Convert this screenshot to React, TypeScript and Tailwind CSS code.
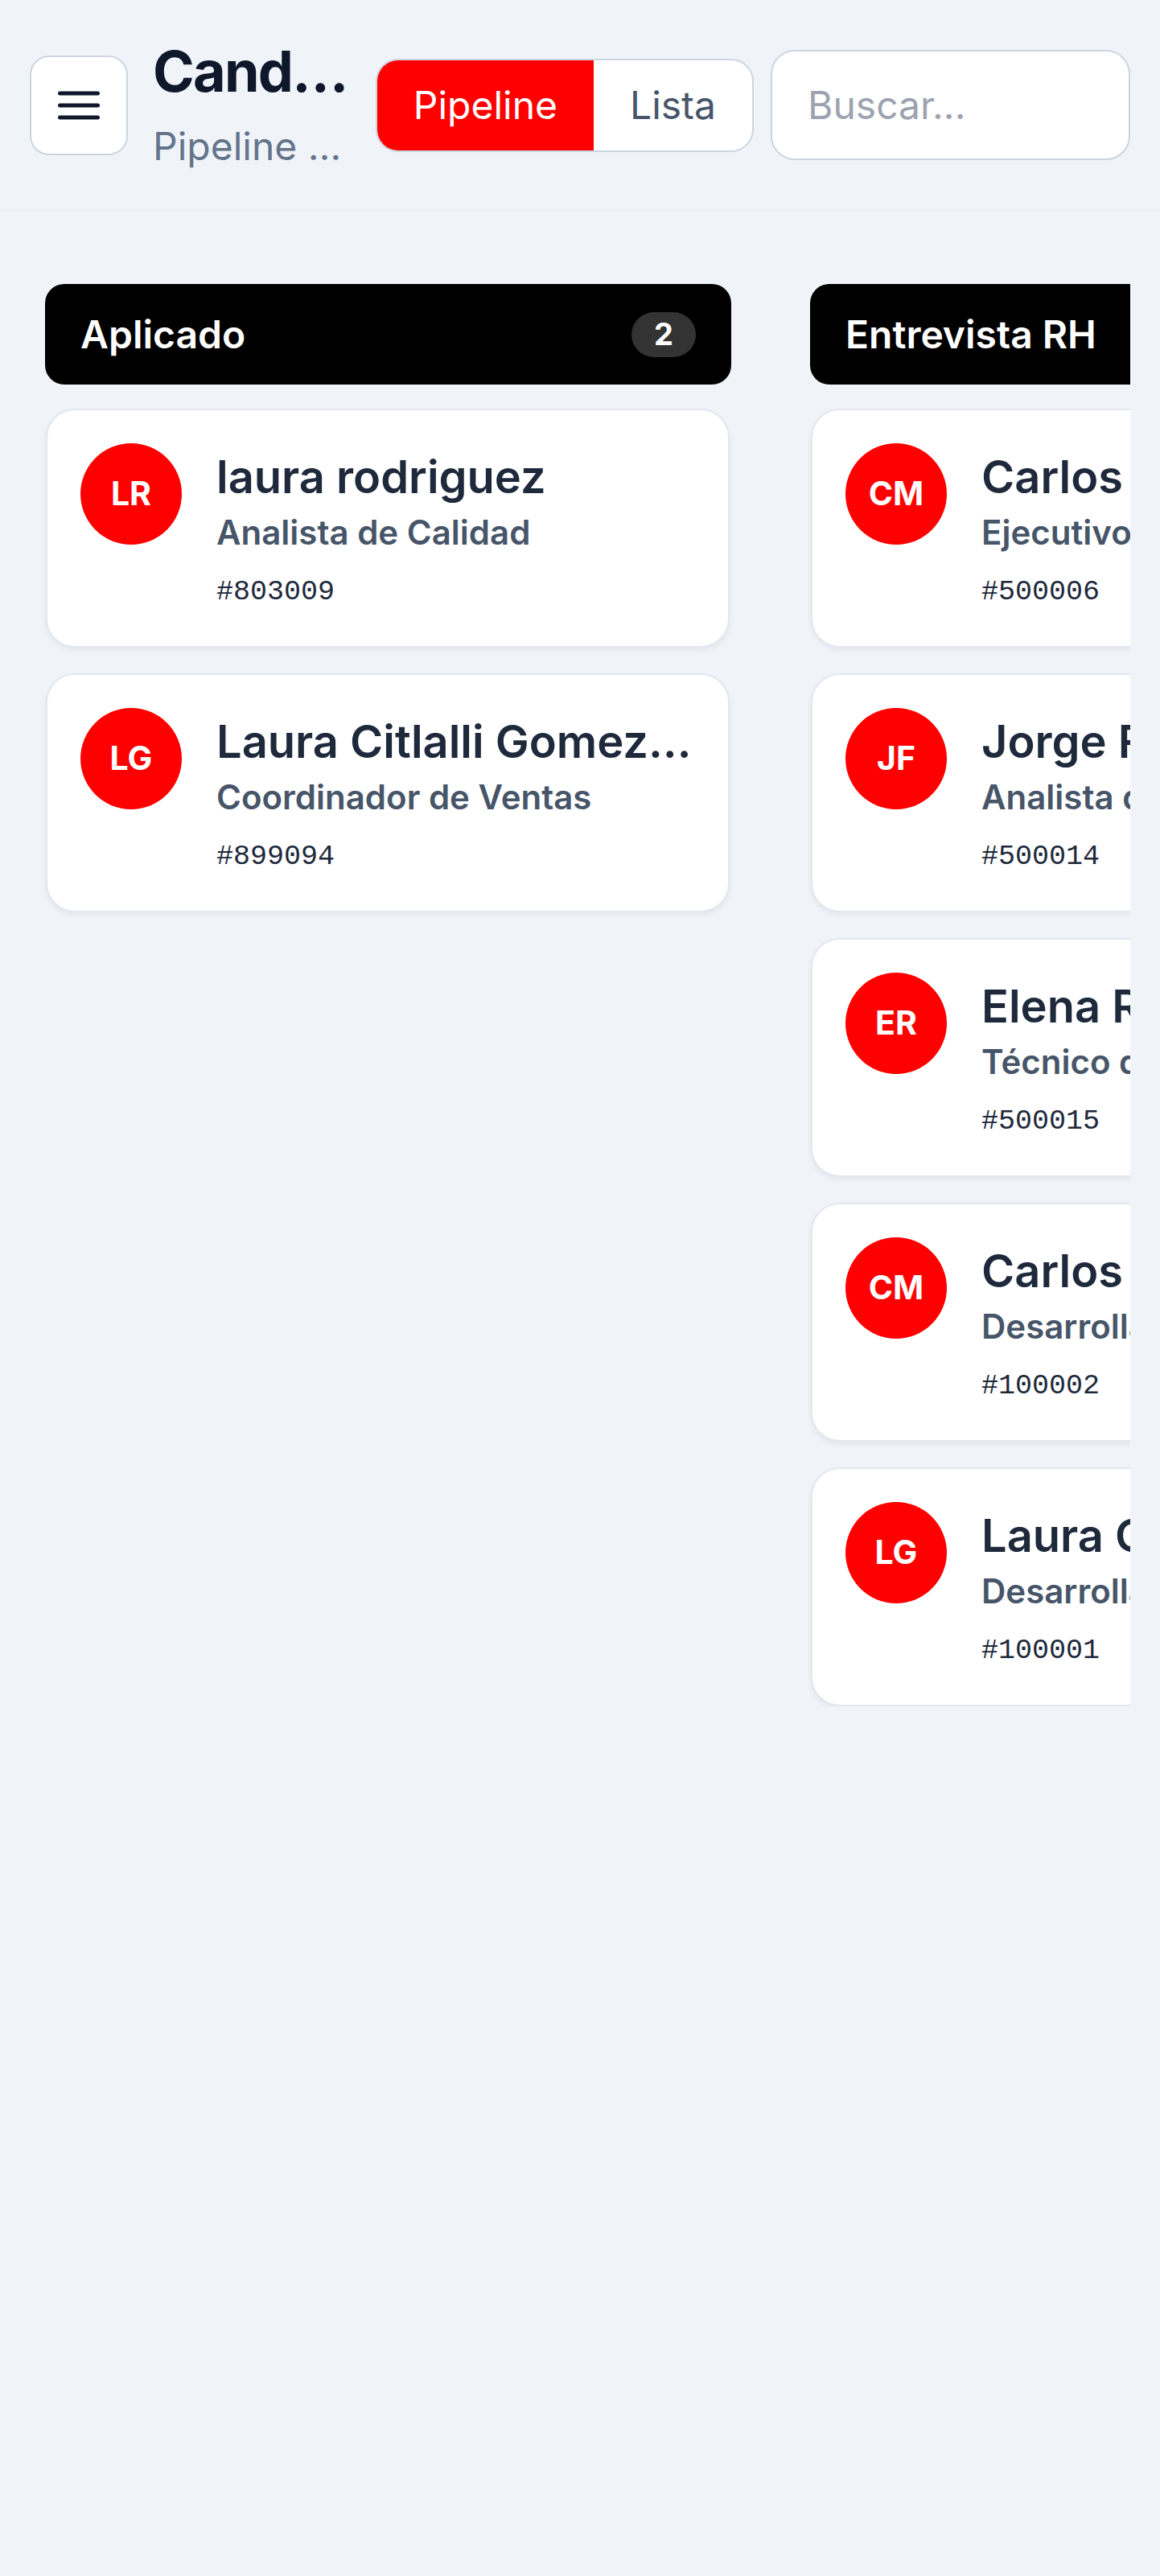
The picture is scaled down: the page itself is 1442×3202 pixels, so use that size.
import React from 'react';

type Candidate = {
    id: string;
    name: string;
    role: string;
};

type Stage = {
    title: string;
    candidates: Candidate[];
};

const stages: Stage[] = [
    {
        title: 'Aplicado',
        candidates: [
            { id: '803009', name: 'laura rodriguez', role: 'Analista de Calidad' },
            { id: '899094', name: 'Laura Citlalli Gomez Garcia', role: 'Coordinador de Ventas' },
        ],
    },
    {
        title: 'Entrevista RH',
        candidates: [
            { id: '500006', name: 'Carlos Mendoza', role: 'Ejecutivo de Ventas' },
            { id: '500014', name: 'Jorge Fernández', role: 'Analista de Datos' },
            { id: '500015', name: 'Elena Ruiz', role: 'Técnico de Soporte' },
            { id: '100002', name: 'Carlos Martínez', role: 'Desarrollador Frontend' },
            { id: '100001', name: 'Laura García', role: 'Desarrollador Backend' },
        ],
    },
    {
        title: 'Entrevista Técnica',
        candidates: [
            { id: '100003', name: 'Miguel Torres', role: 'Desarrollador Full Stack' },
        ],
    },
];

// first letter of first and last word
function initials(name: string) {
    const parts = name.trim().split(/\s+/);
    const last = parts.length > 1 ? parts[parts.length - 1][0] : '';
    return (parts[0][0] + last).toUpperCase();
}

function CandidateCard({ candidate }: { candidate: Candidate }) {
    return (
        <div className="ml-[1px] mr-[2px] flex gap-[43px] rounded-[36px] border-2 border-[#e2e8f0] bg-white pl-[41px] pr-[41px] pt-[41px] pb-[45px] shadow-[0_3px_6px_rgba(15,23,42,0.06)]">
            <div className="flex h-[126px] w-[126px] shrink-0 items-center justify-center rounded-full bg-[#ff0000] text-[41px] font-bold text-white">
                {initials(candidate.name)}
            </div>
            <div className="min-w-0 flex-1 pt-[10px]">
                <div className="truncate text-[56px] font-semibold leading-[64px] text-[#1e293b]">
                    {candidate.name}
                </div>
                <div className="mt-[13px] truncate text-[42px] font-semibold leading-[48px] text-[#475569]">
                    {candidate.role}
                </div>
                <div className="mt-[28px] font-mono text-[35px] leading-[44px] text-[#1e293b]">
                    #{candidate.id}
                </div>
            </div>
        </div>
    );
}

export default function App() {
    return (
        <div className="min-h-screen bg-[#f0f4f9] font-['Inter',sans-serif]">
            {/* top bar */}
            <header className="flex h-[262px] items-center border-b border-[#e3e8ef] px-[37px]">
                <button className="flex h-[124px] w-[122px] shrink-0 items-center justify-center rounded-[24px] border-2 border-[#cbd5e1] bg-white">
                    <svg width="52" height="36" viewBox="0 0 52 36" fill="none">
                        <path d="M2.5 3h47M2.5 18h47M2.5 33h47" stroke="#0f172a" strokeWidth="5" strokeLinecap="round" />
                    </svg>
                </button>
                <div className="ml-[31px] min-w-0 flex-1">
                    <div className="truncate text-[70px] font-bold leading-[80px] tracking-tight text-[#0f172a]">Candidatos</div>
                    <div className="mt-[23px] truncate text-[48px] leading-[60px] text-[#64748b]">Pipeline de reclutamiento</div>
                </div>
                <div className="ml-[31px] flex h-[116px] shrink-0 overflow-hidden rounded-[28px] border-2 border-[#cbd5e1] bg-white">
                    <button className="flex items-center bg-[#ff0000] px-[45px] text-[48px] text-white">Pipeline</button>
                    <button className="flex items-center px-[45px] text-[48px] text-[#475569]">Lista</button>
                </div>
                <input
                    placeholder="Buscar..."
                    className="ml-[21px] h-[137px] w-[447px] shrink-0 rounded-[30px] border-2 border-[#cbd5e1] bg-white px-[44px] text-[48px] text-[#0f172a] outline-none placeholder:text-[#9ca3af]"
                />
            </header>

            {/* board */}
            <main className="mx-[37px] flex gap-[98px] overflow-hidden pl-[19px] pt-[91px]">
                {stages.map((stage) => (
                    <section key={stage.title} className="w-[853px] shrink-0">
                        <div className="flex h-[125px] items-center justify-between rounded-[24px] bg-black px-[44px]">
                            <span className="text-[48px] font-semibold text-white">{stage.title}</span>
                            <span className="flex h-[56px] min-w-[80px] items-center justify-center rounded-full bg-[#333333] px-[20px] text-[38px] font-bold text-white">
                                {stage.candidates.length}
                            </span>
                        </div>
                        <div className="mt-[30px] flex flex-col gap-[32px]">
                            {stage.candidates.map((c) => (
                                <CandidateCard key={c.id} candidate={c} />
                            ))}
                        </div>
                    </section>
                ))}
            </main>
        </div>
    );
}
